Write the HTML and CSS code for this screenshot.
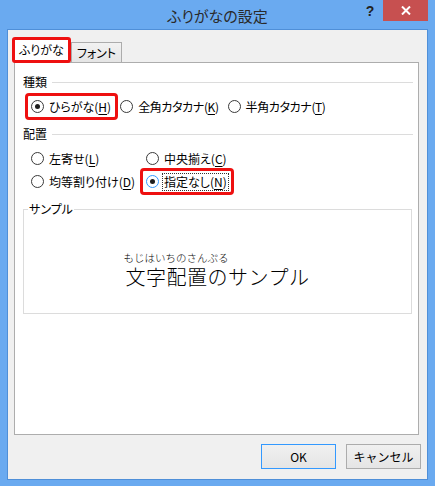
FILE: index.html
```html
<!DOCTYPE html>
<html lang="ja">
<head>
<meta charset="utf-8">
<title>ふりがなの設定</title>
<link rel="stylesheet" href="styles.css">
</head>
<body>
<div class="window">
  <div class="titlebar">
    <div class="spacer"></div>
    <div class="title">ふりがなの設定</div>
    <div class="controls">
      <span class="help">?</span>
      <span class="close"><svg width="10" height="9" viewBox="0 0 10 9"><path d="M1 0.5 L9 8.5 M9 0.5 L1 8.5" stroke="#fff" stroke-width="2" fill="none"/></svg></span>
    </div>
  </div>
  <div class="client">
    <div class="tabs">
      <div class="tab active">ふりがな</div>
      <div class="tab">フォント</div>
    </div>
    <div class="panel">
      <div class="group-head first"><span>種類</span><i class="rule"></i></div>
      <div class="row">
        <div class="opt hl"><span class="radio on"></span><span class="lbl">ひらがな(<u>H</u>)</span></div>
        <div class="opt"><span class="radio"></span><span class="lbl kana">全角カタカナ(<u>K</u>)</span></div>
        <div class="opt"><span class="radio"></span><span class="lbl kana">半角カタカナ(<u>T</u>)</span></div>
      </div>
      <div class="group-head"><span>配置</span><i class="rule"></i></div>
      <div class="grid">
        <div class="opt"><span class="radio"></span><span class="lbl">左寄せ(<u>L</u>)</span></div>
        <div class="opt"><span class="radio"></span><span class="lbl">中央揃え(<u>C</u>)</span></div>
        <div class="opt"><span class="radio"></span><span class="lbl">均等割り付け(<u>D</u>)</span></div>
        <div class="opt hl"><span class="radio on focus"></span><span class="lbl focused">指定なし(<u>N</u>)</span></div>
      </div>
      <fieldset class="sample">
        <legend>サンプル</legend>
        <div class="sample-body">
          <div class="sample-text">
            <div class="ruby">もじはいちのさんぷる</div>
            <div class="base">文字配置のサンプル</div>
          </div>
        </div>
      </fieldset>
    </div>
    <div class="buttons">
      <button class="btn default">OK</button>
      <button class="btn">キャンセル</button>
    </div>
  </div>
</div>
</body>
</html>
```

FILE: styles.css
```css
html, body {
  margin: 0;
  padding: 0;
}
body {
  width: 435px;
  height: 486px;
  overflow: hidden;
  background: #6aaaf0;
  font-family: "Noto Sans CJK JP", "Noto Sans", sans-serif;
  font-size: 12px;
  color: #000;
  font-feature-settings: "palt";
}
.window {
  width: 435px;
  height: 486px;
  background: #6aaaf0;
}
.titlebar {
  height: 29px;
  display: grid;
  grid-template-columns: 1fr auto 1fr;
}
.title {
  font-size: 15px;
  line-height: 31px;
  color: #2a2a2a;
}
.controls {
  display: flex;
  justify-content: flex-end;
  align-items: flex-start;
  padding-right: 7px;
}
.help {
  width: 26px;
  text-align: center;
  font-family: "Liberation Sans", sans-serif;
  font-weight: bold;
  font-size: 14px;
  line-height: 22px;
  color: #222;
}
.close {
  width: 45px;
  height: 21px;
  background: #c75050;
  display: flex;
  align-items: center;
  justify-content: center;
}
.client {
  margin-left: 7px;
  width: 421px;
  height: 451px;
  box-sizing: border-box;
  border: 1px solid #4f8fd8;
  background: #f0f0f0;
}
.tabs {
  margin-top: 7px;
  padding-left: 4px;
  height: 25px;
  display: flex;
  align-items: flex-end;
}
.tab {
  box-sizing: border-box;
  height: 20px;
  width: 51px;
  border: 1px solid #acacac;
  border-bottom: none;
  background: linear-gradient(#f2f2f2, #e5e5e5);
  text-align: center;
  line-height: 19px;
}
.tab.active {
  position: relative;
  z-index: 1;
  width: 59px;
  height: 26px;
  margin-bottom: -1px;
  border: 3px solid #ee1010;
  border-radius: 3px;
  background: #fff;
  line-height: 20px;
}
.panel {
  margin-left: 6px;
  width: 405px;
  height: 373px;
  box-sizing: border-box;
  border: 1px solid #adadad;
  background: #fff;
  overflow: hidden;
}
.group-head {
  margin: 8px 5px 0 8px;
  height: 16px;
  display: flex;
  align-items: center;
  gap: 5px;
  line-height: 16px;
}
.group-head.first {
  margin-top: 11px;
}
.rule {
  flex: 1;
  height: 0;
  border-top: 1px solid #dcdcdc;
}
.row {
  margin: 5px 0 0 12px;
  display: flex;
  gap: 0;
}
.grid {
  margin: 5px 0 0 12px;
  display: grid;
  grid-template-columns: 115px auto;
  justify-items: start;
}
.opt {
  height: 23px;
  box-sizing: border-box;
  display: flex;
  align-items: center;
  padding: 0 3px 0 4px;
  gap: 3px;
  white-space: nowrap;
}
.opt.hl {
  outline: 3px solid #ee1010;
  outline-offset: -1px;
  border-radius: 2px;
}
.radio {
  width: 13px;
  height: 13px;
  box-sizing: border-box;
  border: 1px solid #3a3a3a;
  border-radius: 50%;
  background: #fff;
  display: flex;
  align-items: center;
  justify-content: center;
  flex: none;
}
.radio.on::after {
  content: "";
  width: 5px;
  height: 5px;
  border-radius: 50%;
  background: #1e1e1e;
}
.radio.focus {
  border-color: #3399ff;
}
.lbl {
  line-height: 16px;
  padding: 0 1px;
  border: 1px dotted transparent;
}
.lbl.kana {
  letter-spacing: -0.4px;
}
.lbl.focused {
  border-color: #333;
}
.lbl u {
  text-decoration-thickness: 1px;
  text-underline-offset: 2px;
}
.sample {
  margin: 8px 0 0 8px;
  padding: 0;
  min-width: 0;
  width: 389px;
  height: 113px;
  box-sizing: border-box;
  border: 1px solid #dcdcdc;
}
.sample legend {
  margin-left: 4px;
  padding: 0 1px;
  line-height: 16px;
}
.sample-body {
  padding-top: 35px;
  text-align: center;
}
.sample-text {
  display: inline-block;
  text-align: left;
  font-feature-settings: normal;
  font-weight: 300;
}
.ruby {
  font-size: 10.5px;
  line-height: 12px;
  margin-left: -2px;
}
.base {
  font-size: 20px;
  line-height: 20px;
  margin-top: 3px;
  letter-spacing: 0.5px;
}
.buttons {
  margin-top: 9px;
  padding-right: 6px;
  display: flex;
  justify-content: flex-end;
  gap: 10px;
}
.btn {
  width: 75px;
  height: 25px;
  box-sizing: border-box;
  border: 1px solid #acacac;
  background: linear-gradient(#f0f0f0, #e5e5e5);
  font-family: inherit;
  font-size: 12px;
  color: #000;
  padding: 0;
  margin: 0;
}
.btn.default {
  border-color: #3399ff;
}
```
